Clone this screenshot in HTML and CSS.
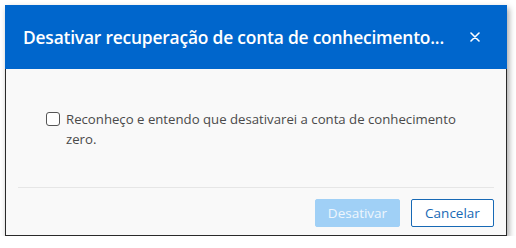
FILE: index.html
```html
<!DOCTYPE html>
<html lang="pt">
<head>
<meta charset="utf-8">
<link rel="stylesheet" href="styles.css">
</head>
<body>
<div class="dialog">
  <div class="header">
    <h1 class="title">Desativar recuperação de conta de conhecimento...</h1>
    <button class="close" aria-label="Fechar">
      <svg width="10" height="10" viewBox="0 0 10 10"><path d="M1 1L9 9M9 1L1 9" stroke="#fff" stroke-width="1.6" stroke-linecap="round"/></svg>
    </button>
  </div>
  <div class="body">
    <label class="check">
      <span class="box"></span>
      <span class="label-text">Reconheço e entendo que desativarei a conta de conhecimento zero.</span>
    </label>
  </div>
  <div class="footer">
    <button class="btn primary" disabled>Desativar</button>
    <button class="btn secondary">Cancelar</button>
  </div>
</div>
</body>
</html>
```
FILE: styles.css
```css
html, body {
  margin: 0;
  padding: 0;
  background: #ffffff;
}
body {
  padding: 5px 0 0 5px;
  font-family: "Open Sans", "Noto Sans", sans-serif;
}
.dialog {
  width: 500px;
  height: 230px;
  border: 1px solid #2a2a2a;
  border-top: none;
  background: #f9f9f9;
  box-shadow: 2px 3px 6px rgba(0,0,0,0.35);
  display: flex;
  flex-direction: column;
}
.header {
  height: 64px;
  background: #0066cc;
  display: flex;
  align-items: center;
  justify-content: space-between;
  padding: 0 26px 0 18px;
  margin: 0 -1px;
}
.title {
  margin: 0;
  color: #ffffff;
  font-size: 17.4px;
  font-weight: 600;
  letter-spacing: -0.2px;
}
.close {
  background: none;
  border: none;
  padding: 0;
  width: 12px;
  height: 12px;
  display: flex;
  align-items: center;
  justify-content: center;
}
.body {
  flex: 1;
  padding: 40px 40px 0 40px;
}
.check {
  display: flex;
  align-items: flex-start;
  gap: 6px;
  color: #4a4a4a;
  font-size: 13.2px;
  line-height: 20px;
}
.box {
  flex: none;
  width: 12px;
  height: 12px;
  border: 1px solid #555;
  border-radius: 3px;
  background: #fff;
  margin-top: 3px;
}
.footer {
  margin: 0 12px;
  border-top: 1px solid #e6e6e6;
  padding: 11px 0 8px;
  display: flex;
  justify-content: flex-end;
  gap: 11px;
}
.btn {
  height: 28px;
  border-radius: 2px;
  font-family: "Open Sans", "Noto Sans", sans-serif;
  font-size: 13.5px;
  padding: 0;
}
.primary {
  width: 85px;
  background: #a0d0f6;
  border: 1px solid #a0d0f6;
  color: #eef6fd;
}
.secondary {
  width: 83px;
  background: #ffffff;
  border: 1px solid #1769b5;
  color: #1769b5;
}
```
